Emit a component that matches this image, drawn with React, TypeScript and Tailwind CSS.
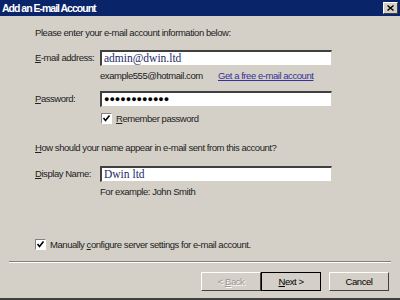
import React from "react";

const ui = { fontFamily: '"Liberation Sans", Arial, sans-serif' };
const serif = { fontFamily: '"Liberation Serif", "Times New Roman", serif' };

function Field({ value, dots }: { value: string; dots?: boolean }) {
  return (
    <div className="w-[232px] h-[16px] shrink-0 bg-white border-t-2 border-l-2 border-t-[#404040] border-l-[#404040] border-r border-b border-r-[#d4d0c8] border-b-[#d4d0c8] flex items-center pl-[2px]">
      {dots ? (
        <span className="text-[9px] leading-none tracking-normal text-black">{value}</span>
      ) : (
        <span className="text-[11.5px] leading-none tracking-normal text-[#1c2a6a]" style={serif}>
          {value}
        </span>
      )}
    </div>
  );
}

function Check() {
  return (
    <div className="w-[11px] h-[11px] shrink-0 bg-white border-t border-l border-t-[#808080] border-l-[#808080] border-r border-b border-r-white border-b-white flex items-center justify-center">
      <svg width="9" height="9" viewBox="0 0 9 9">
        <path d="M1.5 4 L3.5 6.5 L7.5 1.5" stroke="#000" strokeWidth="1.6" fill="none" />
      </svg>
    </div>
  );
}

function Btn({ children, kind }: { children: React.ReactNode; kind?: "default" | "disabled" }) {
  const outer =
    kind === "default"
      ? "border border-black"
      : "border-t border-l border-t-white border-l-white border-r border-b border-r-[#404040] border-b-[#404040]";
  return (
    <div className={`w-[60px] h-[19px] bg-[#d4d0c8] flex items-center justify-center ${outer} ${kind === "disabled" ? "text-[#9a9890]" : "text-black"}`}>
      {children}
    </div>
  );
}

export default function App() {
  return (
    <div className="w-[400px] h-[300px] bg-[#d4d0c8] flex flex-col overflow-hidden border-b-2 border-b-[#404040] text-[9.5px] tracking-[-0.45px] leading-none text-[#222] whitespace-nowrap" style={ui}>
      <div className="h-[16px] shrink-0 bg-[#0a246a] flex items-center justify-between pl-[2px] pr-[2px]">
        <span className="text-white font-bold text-[10.5px] tracking-[-1px] leading-none">Add an E-mail Account</span>
        <div className="w-[15px] h-[12px] bg-[#d4d0c8] border-t border-l border-t-white border-l-white border-r border-b border-r-[#404040] border-b-[#404040] flex items-center justify-center">
          <svg width="7" height="6" viewBox="0 0 7 6">
            <path d="M0.5 0.5 L6.5 5.5 M6.5 0.5 L0.5 5.5" stroke="#000" strokeWidth="1.4" />
          </svg>
        </div>
      </div>

      <div className="flex flex-col pl-[35px] shrink-0">
        <div className="mt-[12px] h-[10px] flex items-center">Please enter your e-mail account information below:</div>

        <div className="mt-[12px] h-[16px] flex items-center">
          <span className="w-[65px] shrink-0"><u>E</u>-mail address:</span>
          <Field value="admin@dwin.ltd" />
        </div>
        <div className="mt-[5px] h-[10px] flex items-center pl-[65px]">
          <span className="w-[118px] shrink-0">example555@hotmail.com</span>
          <span className="underline text-[#33339a]">Get a free e-mail account</span>
        </div>

        <div className="mt-[10px] h-[16px] flex items-center">
          <span className="w-[65px] shrink-0"><u>P</u>assword:</span>
          <Field value="●●●●●●●●●●●●" dots />
        </div>
        <div className="mt-[6px] h-[11px] flex items-center pl-[66px] gap-[4px]">
          <Check />
          <span><u>R</u>emember password</span>
        </div>

        <div className="mt-[19px] h-[10px] flex items-center"><u>H</u>ow should your name appear in e-mail sent from this account?</div>

        <div className="mt-[13px] h-[16px] flex items-center">
          <span className="w-[65px] shrink-0"><u>D</u>isplay Name:</span>
          <Field value="Dwin ltd" />
        </div>
        <div className="mt-[5px] h-[10px] flex items-center pl-[65px]">For example: John Smith</div>

        <div className="mt-[42px] h-[11px] flex items-center gap-[4px]">
          <Check />
          <span>Manually <u>c</u>onfigure server settings for e-mail account.</span>
        </div>
      </div>

      <div className="mt-[11px] mx-[9px] h-[2px] shrink-0 border-t border-t-[#808080] border-b border-b-white" />

      <div className="mt-[9px] flex justify-end pr-[11px] shrink-0">
        <Btn kind="disabled">
          <span style={{ textShadow: "1px 1px 0 #fff" }}>&lt; <u>B</u>ack</span>
        </Btn>
        <Btn kind="default">
          <span><u>N</u>ext &gt;</span>
        </Btn>
        <div className="w-[8px]" />
        <Btn>Cancel</Btn>
      </div>
    </div>
  );
}
